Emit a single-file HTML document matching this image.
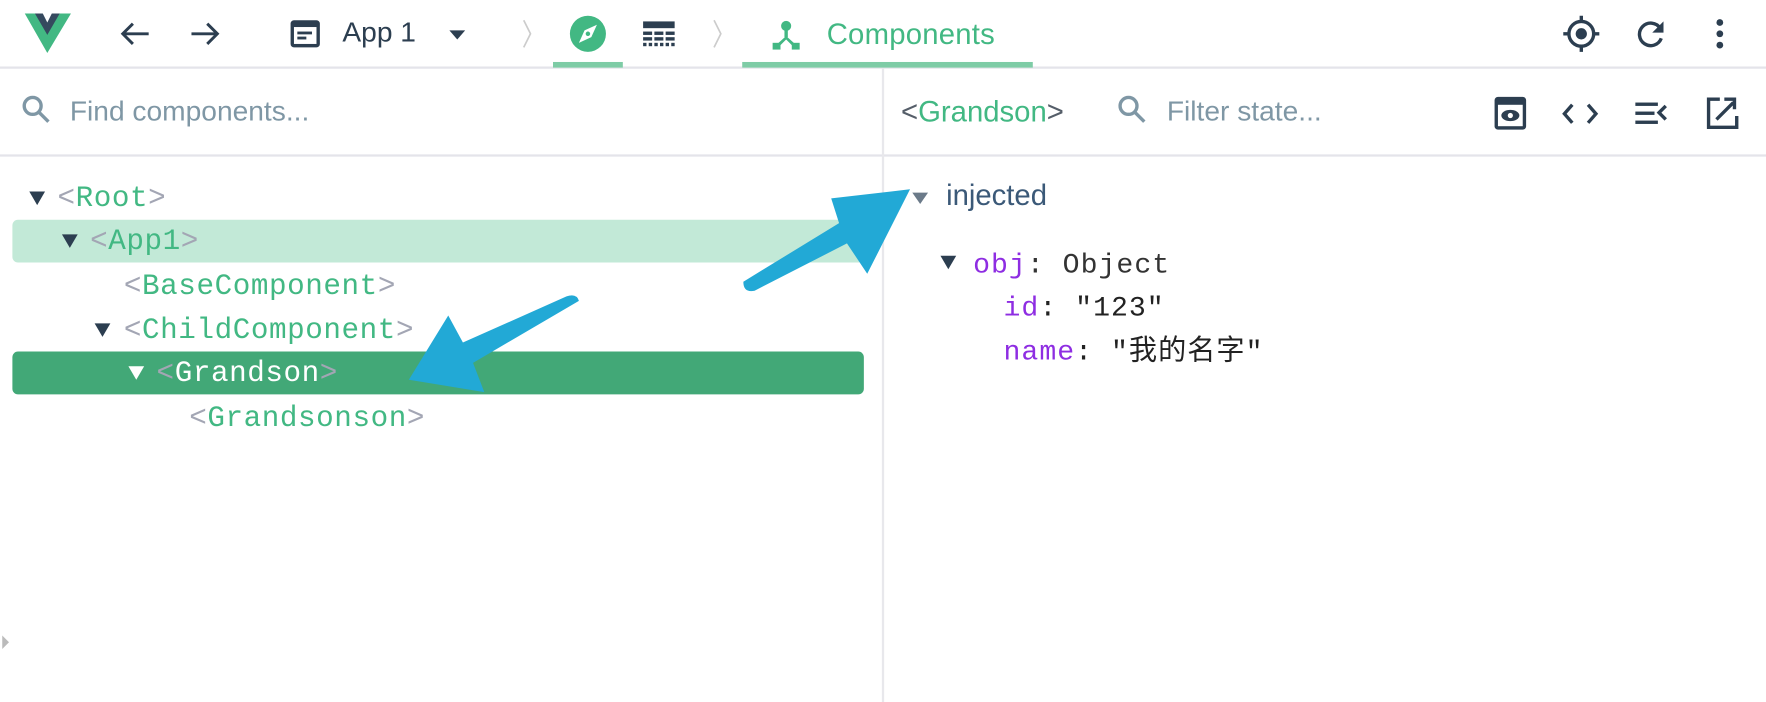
<!DOCTYPE html>
<html><head><meta charset="utf-8"><style>
html,body{margin:0;padding:0;background:#fff;overflow:hidden;width:1766px;height:702px}
#w{position:absolute;left:0;top:0;width:1568px;height:623px;transform:scale(1.12628,1.1268);transform-origin:0 0;font-family:"Liberation Sans","Noto Sans CJK SC",sans-serif}
.a{position:absolute}
.mono{font-family:"Liberation Mono","Noto Sans CJK SC",monospace;font-size:26px;letter-spacing:0.5px;white-space:nowrap;line-height:30px}
.g{color:#42b883}.b{color:#a3a6b4}
.tri{position:absolute;width:0;height:0;border-left:7px solid transparent;border-right:7px solid transparent;border-top:12px solid #2c3e50}
</style></head><body><div id="w">
<div class="a" style="left:0;top:59px;width:1568px;height:2px;background:#e4e4ea"></div>
<div class="a" style="left:491px;top:55px;width:62px;height:5px;background:#7ecca6"></div>
<div class="a" style="left:659px;top:55px;width:258px;height:5px;background:#7ecca6"></div>
<svg class="a" style="left:0;top:0" width="1568" height="60">
<polygon points="22,12 33,12 42,28 51,12 63,12 42,47" fill="#42b883"/>
<polygon points="31,12 38,12 42,20 46,12 53,12 42,31" fill="#35495e"/>
<g stroke="#2c3e50" stroke-width="2.6" fill="none">
<path d="M132,30H109M118,21l-9,9 9,9"/><path d="M170,30H193M184,21l9,9-9,9"/>
</g>
<rect x="258" y="18" width="26" height="24" rx="3" fill="#2c3e50"/>
<rect x="261" y="24" width="20" height="15" fill="#fff"/>
<rect x="264" y="28" width="13" height="2.5" fill="#2c3e50"/><rect x="264" y="32.5" width="8" height="2.5" fill="#2c3e50"/>
<polygon points="399,27 413,27 406,35" fill="#2c3e50"/>
<path d="M465,18l6,12-6,12M634,18l6,12-6,12" stroke="#ccc" stroke-width="1.5" fill="none"/>
<circle cx="522" cy="30" r="16" fill="#42b883"/>
<polygon points="530,22 525,33 514,38 519,27" fill="#fff"/><circle cx="522" cy="30" r="2" fill="#42b883"/>
<g fill="#2c3e50"><rect x="571" y="19" width="28" height="6"/><rect x="571" y="28" width="8" height="3"/><rect x="581" y="28" width="8" height="3"/><rect x="591" y="28" width="8" height="3"/>
<rect x="571" y="33" width="8" height="3"/><rect x="581" y="33" width="8" height="3"/><rect x="591" y="33" width="8" height="3"/>
<rect x="571" y="38" width="3" height="3"/><rect x="576" y="38" width="3" height="3"/><rect x="581" y="38" width="3" height="3"/><rect x="586" y="38" width="3" height="3"/><rect x="591" y="38" width="3" height="3"/><rect x="596" y="38" width="3" height="3"/></g>
<g fill="#42b883"><circle cx="698" cy="23" r="4.5"/><rect x="696.5" y="23" width="3" height="10"/><path d="M698,32l-9,8 2,2 7,-7 7,7 2,-2z"/><rect x="686" y="38" width="7" height="6"/><rect x="703" y="38" width="7" height="6"/></g>
<circle cx="1404" cy="30" r="5" fill="#2c3e50"/>
<circle cx="1404" cy="30" r="11" stroke="#2c3e50" stroke-width="3" fill="none"/>
<path d="M1404,14v5M1404,41v5M1388,30h5M1415,30h5" stroke="#2c3e50" stroke-width="3"/>
<path d="M1474,25a10,10 0 1 0 1,9" stroke="#2c3e50" stroke-width="3" fill="none"/><polygon points="1477,19 1477,29 1467,29" fill="#2c3e50"/>
<circle cx="1527" cy="20" r="3" fill="#2c3e50"/><circle cx="1527" cy="30" r="3" fill="#2c3e50"/><circle cx="1527" cy="40" r="3" fill="#2c3e50"/>
</svg>
<div class="a" style="left:304px;top:15px;font-size:25px;color:#2c3e50">App 1</div>
<div class="a" style="left:734px;top:15px;font-size:26px;color:#42b883;letter-spacing:0.2px">Components</div>
<div class="a" style="left:0;top:137px;width:1568px;height:2px;background:#e4e4ea"></div>
<div class="a" style="left:783px;top:61px;width:2px;height:562px;background:#e8e8ec"></div>
<svg class="a" style="left:0;top:61px" width="1568" height="76">
<g stroke="#7f97a5" stroke-width="3" fill="none"><circle cx="29" cy="33" r="7.5"/><path d="M35,39l8,8"/></g>
<g stroke="#7f97a5" stroke-width="3" fill="none"><circle cx="1002" cy="33" r="7.5"/><path d="M1008,39l8,8"/></g>
<rect x="1327" y="25" width="28" height="29" rx="3" fill="#2c3e50"/><rect x="1330" y="32" width="22" height="19" fill="#fff"/>
<ellipse cx="1341" cy="41.5" rx="8" ry="5" fill="#2c3e50"/><circle cx="1341" cy="41.5" r="2.3" fill="#fff"/>
<path d="M1396,32l-7,8 7,8M1410,32l7,8-7,8" stroke="#2c3e50" stroke-width="3" fill="none"/>
<g fill="#2c3e50"><rect x="1452" y="30" width="20" height="3"/><rect x="1452" y="38" width="17" height="3"/><rect x="1452" y="46" width="20" height="3"/></g>
<path d="M1479,33l-6,6 6,6" stroke="#2c3e50" stroke-width="3" fill="none"/>
<path d="M1527,27h-10v25h25v-10" stroke="#2c3e50" stroke-width="3" fill="none"/>
<path d="M1524,45l15,-15M1531,27h9v9" stroke="#2c3e50" stroke-width="3" fill="none"/>
</svg>
<div class="a" style="left:62px;top:85px;font-size:25px;color:#7f97a5">Find components...</div>
<div class="a" style="left:800px;top:84px;font-size:26px;color:#42b883"><span style="color:#555e69">&lt;</span>Grandson<span style="color:#555e69">&gt;</span></div>
<div class="a" style="left:1036px;top:85px;font-size:25px;color:#7f97a5">Filter state...</div>
<div class="a" style="left:11px;top:195px;width:756px;height:38px;background:#c2e9d7;border-radius:5px"></div>
<div class="a" style="left:11px;top:312px;width:756px;height:38px;background:#42a877;border-radius:5px"></div>
<div class="tri" style="left:26px;top:170px"></div>
<div class="tri" style="left:55px;top:208px"></div>
<div class="tri" style="left:84px;top:287px"></div>
<div class="tri" style="left:114px;top:325px;border-top-color:#fff"></div>
<div class="a mono" style="left:51px;top:161px"><span class="b">&lt;</span><span class="g">Root</span><span class="b">&gt;</span></div>
<div class="a mono" style="left:80px;top:199px"><span class="b">&lt;</span><span class="g">App1</span><span class="b">&gt;</span></div>
<div class="a mono" style="left:110px;top:239px"><span class="b">&lt;</span><span class="g">BaseComponent</span><span class="b">&gt;</span></div>
<div class="a mono" style="left:110px;top:278px"><span class="b">&lt;</span><span class="g">ChildComponent</span><span class="b">&gt;</span></div>
<div class="a mono" style="left:139px;top:316px"><span class="b">&lt;</span><span style="color:#fff">Grandson</span><span class="b">&gt;</span></div>
<div class="a mono" style="left:168px;top:356px"><span class="b">&lt;</span><span class="g">Grandsonson</span><span class="b">&gt;</span></div>
<div class="a" style="left:2px;top:564px;width:0;height:0;border-top:6px solid transparent;border-bottom:6px solid transparent;border-left:6px solid #bbb"></div>
<div class="a" style="left:810px;top:171px;width:0;height:0;border-left:7px solid transparent;border-right:7px solid transparent;border-top:10px solid #6b7a89"></div>
<div class="a" style="left:840px;top:158px;font-size:26px;color:#3b5978">injected</div>
<div class="tri" style="left:835px;top:227px"></div>
<div class="a mono" style="left:864px;top:221px;font-size:25px;letter-spacing:0.9px;color:#333"><span style="color:#8e2de2">obj</span>: Object</div>
<div class="a mono" style="left:891px;top:259px;font-size:25px;letter-spacing:0.9px;color:#222"><span style="color:#8e2de2">id</span>: "123"</div>
<div class="a mono" style="left:891px;top:298px;font-size:25px;letter-spacing:0.9px;color:#222"><span style="color:#8e2de2">name</span>: "我的名字"</div>
<svg class="a" style="left:0;top:0" width="1568" height="623">
<path d="M660,250 Q660,260 670,258 L752,216 L770,243 L808,168 L738,176 L745,198 Z" fill="#22a9d6"/>
<path d="M514,267 Q512,260 503,263 L411,304 L398,280 L363,337 L430,348 L420,322 Z" fill="#22a9d6"/>
</svg>
</div></body></html>
